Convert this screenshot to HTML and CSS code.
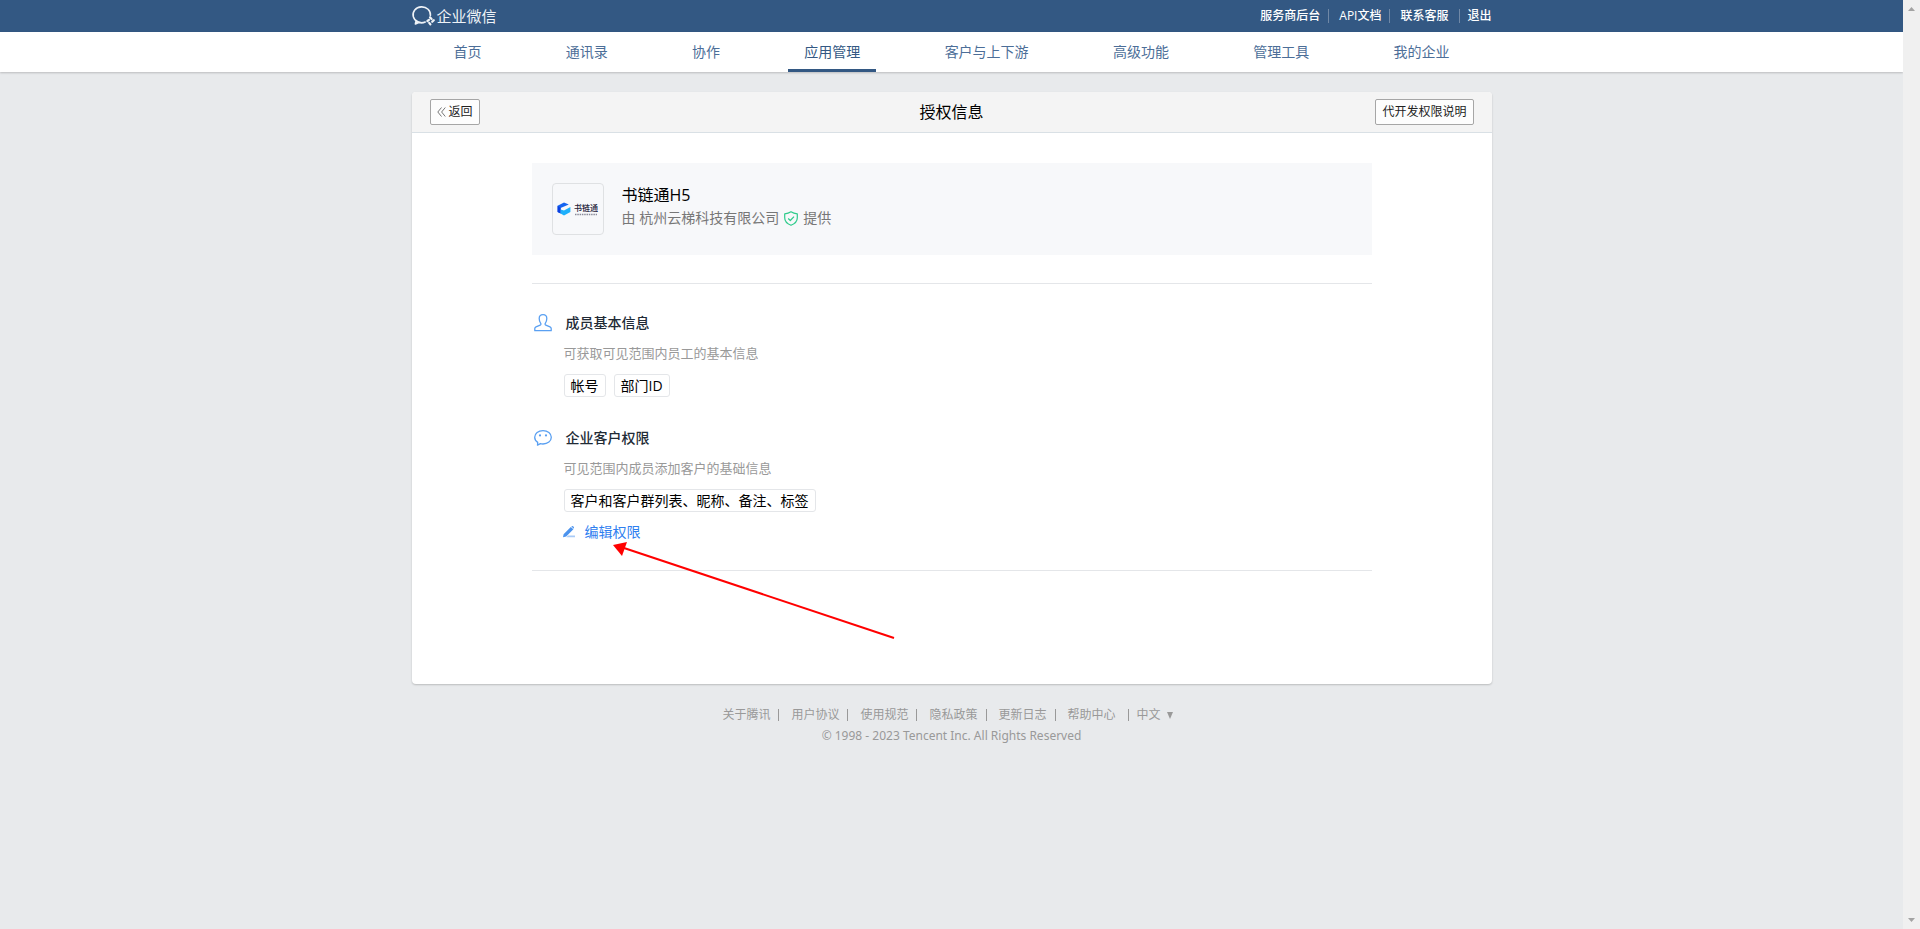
FILE: index.html
```html
<!DOCTYPE html>
<html lang="zh-CN">
<head>
<meta charset="utf-8">
<title>企业微信 - 授权信息</title>
<link rel="stylesheet" href="styles.css">
</head>
<body>
<div class="page">
  <header class="topbar">
    <div class="container topbar-inner">
      <a class="brand" href="#">
        <svg class="brand-icon" viewBox="0 0 24 22" fill="none" stroke="currentColor" stroke-width="1.6" stroke-linejoin="round" stroke-linecap="round">
          <path d="M18.400 10.600A8.700 7.900 0 1 0 13.200 17M4 16.200L3.400 19L6.800 17.500C9.200 18.200 11.400 17.900 13.200 17"/>
          <path d="M18 12.400l1.600 1.600M21.800 15.200l-1.600 1.600M18.400 19.400l-1.200-1.600M15.400 16l1.600-1.200" stroke-width="2.200"/>
        </svg>
        <span>企业微信</span>
      </a>
      <nav class="toplinks">
        <a href="#">服务商后台</a>
        <a href="#">API文档</a>
        <a href="#">联系客服</a>
        <a class="logout" href="#">退出</a>
      </nav>
    </div>
  </header>
  <div class="navbar">
    <nav class="container nav">
      <a href="#">首页</a>
      <a href="#">通讯录</a>
      <a href="#">协作</a>
      <a class="active" href="#">应用管理</a>
      <a href="#">客户与上下游</a>
      <a href="#">高级功能</a>
      <a href="#">管理工具</a>
      <a href="#">我的企业</a>
    </nav>
  </div>
  <main class="container card">
    <div class="card-head">
      <button class="btn" type="button">
        <svg class="back-icon" viewBox="0 0 9 10" fill="none" stroke="#777" stroke-width="1"><path d="M4.500 .5L.8 5l3.700 4.500M8.300 .5L4.600 5l3.700 4.500"/></svg>返回
      </button>
      <h1>授权信息</h1>
      <button class="btn" type="button">代开发权限说明</button>
    </div>
    <div class="card-body">
      <section class="app">
        <div class="app-logo">
          <svg class="app-mark" viewBox="0 0 14 14">
            <path d="M7 .6L.6 3.800v6.200L3.600 11.600V6L11.800 2.600z" fill="#1464f0"/>
            <path d="M.6 3.800v6.200L3.600 11.600V6z" fill="#0a3fe0"/>
            <path d="M3.600 11.600L7 13.400l6.400-3.400V5L7 8.400l-3.400-1z" fill="#1eb0fb"/>
          </svg>
          <div class="app-word"><b>书链通</b>
            <svg viewBox="0 0 24 3" stroke="#8a8c9a" stroke-width="1.500" stroke-dasharray="1.500 .8"><path d="M1 1.500h22"/></svg>
          </div>
        </div>
        <div class="app-text">
          <h2>书链通H5</h2>
          <p>由 杭州云梯科技有限公司
            <svg class="shield" viewBox="0 0 14 15" fill="none" stroke="#2dcb8b" stroke-width="1.200" stroke-linejoin="round"><path d="M7 .8c2 1.400 4 1.900 6.300 2v4c0 3.600-2.300 6-6.300 7.500C3 12.800.7 10.400.7 6.800v-4C3 2.700 5 2.200 7 .8z"/><path d="M4.200 7.500l2.100 2 3.700-3.800"/></svg>
            提供</p>
        </div>
      </section>
      <div class="perms">
        <section class="perm">
          <svg class="perm-icon" viewBox="0 0 18 18" fill="none" stroke="#5aa0f2" stroke-width="1.300" stroke-linejoin="round"><path d="M9 .7C6.600 .7 5.200 2.300 5.200 4.600c0 2.100.6 3.500 1.500 4.700.5.700.2 1.500-.5 1.800L2 12.900c-.8.400-1.200.9-1.200 1.500V16.700h16.400v-2.300c0-.6-.4-1.100-1.200-1.500L11.800 11.100c-.7-.3-1-1.100-.5-1.800.9-1.200 1.500-2.600 1.500-4.700C12.800 2.300 11.400 .7 9 .7z"/></svg>
          <div class="perm-text">
            <h3>成员基本信息</h3>
            <p>可获取可见范围内员工的基本信息</p>
            <div class="tags"><span>帐号</span><span>部门ID</span></div>
          </div>
        </section>
        <section class="perm">
          <svg class="perm-icon" viewBox="0 0 18 18" fill="none" stroke="#5aa0f2" stroke-width="1.300" stroke-linejoin="round"><path d="M9 1.600C4.300 1.600 .7 4.500 .7 8.300c0 2.100 1.200 3.900 3 5.100L3.500 16.200l2.900-1.500c.8.200 1.700.3 2.600.3 4.700 0 8.300-2.900 8.300-6.700S13.700 1.600 9 1.600z"/><circle cx="6" cy="6.400" r="1.100" fill="#5aa0f2" stroke="none"/><circle cx="12" cy="6.400" r="1.100" fill="#5aa0f2" stroke="none"/></svg>
          <div class="perm-text">
            <h3>企业客户权限</h3>
            <p>可见范围内成员添加客户的基础信息</p>
            <div class="tags"><span>客户和客户群列表、昵称、备注、标签</span></div>
            <a class="edit" href="#">
              <svg class="edit-icon" viewBox="0 0 12 12"><path d="M0 11.200l.6-3L7.800 1l2.600 2.200L3.200 10.400zM8.400 .5l.6-.4c.8-.3 2 .8 2 1.600l-.3 1z" fill="#4b93ee"/><path d="M5 9.600H12v1.600H3.400z" fill="#a9cbf7"/></svg>
              编辑权限</a>
            <svg class="arrow" viewBox="0 0 284 98"><path d="M8 4L281 95" stroke="#f00" stroke-width="2"/><path d="M0 2L14 -1L9 13z" fill="#f00"/></svg>
          </div>
        </section>
      </div>
    </div>
  </main>
  <footer class="footer">
    <nav class="footlinks">
      <a href="#">关于腾讯</a><a href="#">用户协议</a><a href="#">使用规范</a><a href="#">隐私政策</a><a href="#">更新日志</a><a href="#">帮助中心</a>
      <button class="lang" type="button">中文 <svg viewBox="0 0 6 7"><path d="M0 0h6L3 7z" fill="#999"/></svg></button>
    </nav>
    <p>© 1998 - 2023 Tencent Inc. All Rights Reserved</p>
  </footer>
</div>
<div class="scrollbar">
  <svg viewBox="0 0 7 4"><path d="M3.500 0L7 4H0z" fill="#a3a3a3"/></svg>
  <svg viewBox="0 0 7 4"><path d="M0 0h7L3.500 4z" fill="#a3a3a3"/></svg>
</div>
</body>
</html>
```

FILE: styles.css
```css
* { box-sizing: border-box; }
body {
  margin: 0;
  display: flex;
  min-height: 100vh;
  background: #e8eaec;
  color: #000;
  font: 14px/20px "Open Sans", "Noto Sans CJK SC", sans-serif;
}
h1, h2, h3, p { margin: 0; font-weight: 400; }
a { color: inherit; text-decoration: none; }
svg { display: block; flex: none; overflow: visible; }
button { font: inherit; color: inherit; cursor: pointer; }
.page { flex: 1; min-width: 0; }
.container { width: 100%; max-width: 1080px; margin: 0 auto; }

.scrollbar {
  position: sticky;
  top: 0;
  width: 17px;
  height: 100vh;
  padding: 7px 5px;
  background: #f0f0f0;
  display: flex;
  flex-direction: column;
  justify-content: space-between;
}
.scrollbar svg { width: 7px; height: 4px; }

.topbar { background: #335883; color: #fff; }
.topbar-inner { height: 32px; display: flex; align-items: center; justify-content: space-between; }
.brand { display: flex; align-items: center; gap: 1px; color: #eef2f7; font-size: 15px; }
.brand-icon { width: 24px; height: 22px; }
.toplinks { display: flex; font-size: 12px; line-height: 14px; font-weight: 500; }
.toplinks a:not(.logout)::after { content: ""; display: inline-block; height: 14px; margin: 0 10px 0 8px; border-left: 1px solid #7088a6; vertical-align: top; }
.toplinks a:nth-child(3)::after { margin: 0 7px 0 11px; }

.navbar { background: #fff; box-shadow: 0 1px 2px rgba(0, 0, 0, .2); }
.nav { display: flex; justify-content: space-between; padding: 0 26px; color: #4c6e98; }
.nav a { height: 40px; line-height: 40px; padding: 0 16px; }
.nav .active { color: #335883; border-bottom: 3px solid #335883; }

.card { margin-top: 20px; background: #fff; border-radius: 4px; box-shadow: 0 1px 2px rgba(0, 0, 0, .2); }
.card-head {
  display: flex;
  align-items: center;
  justify-content: space-between;
  position: relative;
  height: 41px;
  padding: 0 18px;
  background: #f4f4f4;
  border-bottom: 1px solid #d9e0e5;
  border-radius: 4px 4px 0 0;
}
.card-head h1 { position: absolute; left: 0; right: 0; text-align: center; font-size: 16px; pointer-events: none; }
.btn {
  display: flex;
  align-items: center;
  gap: 3px;
  height: 26px;
  padding: 0 6px;
  border: 1px solid #a6a6a6;
  border-radius: 2px;
  background: #fdfdfd;
  color: #222;
  font-size: 12px;
}
.back-icon { width: 9px; height: 10px; }
.card-body { padding: 30px 120px 113px; }

.app { display: flex; gap: 18px; padding: 20px; background: #f7f8fa; }
.app-logo { display: flex; align-items: center; justify-content: center; gap: 3px; width: 52px; height: 52px; border: 1px solid #dfe1e3; border-radius: 4px; }
.app-mark { width: 14px; height: 14px; }
.app-word { color: #1c2038; font-size: 8px; line-height: 10px; }
.app-word b { display: block; font-weight: 500; }
.app-word svg { width: 24px; height: 3px; }
.app-text h2 { font-size: 16px; line-height: 24px; }
.app-text p { display: flex; align-items: center; gap: 5px; line-height: 22px; color: #777; }
.shield { width: 14px; height: 15px; }

.perms { display: flex; flex-direction: column; gap: 31px; margin-top: 28px; padding: 29px 2px 28px; border-top: 1px solid #e4e6e9; border-bottom: 1px solid #e4e6e9; }
.perm { display: flex; gap: 12px; }
.perm-icon { width: 18px; height: 18px; margin-top: 1px; }
.perm-text { position: relative; }
.perm h3 { font-size: 14px; font-weight: 500; line-height: 20px; color: #222b36; padding-left: 2px; }
.perm p { margin: 10px 0 11px; font-size: 13px; line-height: 20px; color: #999; }
.tags { display: flex; gap: 8px; }
.tags span { height: 23px; padding: 0 6px; border: 1px solid #e4e6e9; border-radius: 3px; line-height: 21px; }
.edit { display: flex; align-items: center; gap: 10px; margin: 10px 0 0 -1px; color: #2f80f0; line-height: 20px; }
.edit-icon { width: 12px; height: 12px; }
.arrow { position: absolute; left: 49px; top: 115px; width: 284px; height: 98px; }

.footer { padding: 20px 0; font-size: 12px; color: #999; text-align: center; }
.footlinks { display: flex; justify-content: center; padding-right: 8px; line-height: 22px; }
.footlinks a { display: flex; align-items: center; }
.footlinks a::after { content: ""; height: 12px; margin: 0 12px 0 8px; border-left: 1px solid #999; }
.footlinks a:last-of-type::after { margin: 0 8px 0 12px; }
.lang { display: flex; align-items: center; gap: 6px; border: 0; padding: 0; background: none; color: #999; }
.lang svg { width: 6px; height: 7px; }
.footer p { font-family: "Noto Sans", sans-serif; line-height: 20px; }
```
